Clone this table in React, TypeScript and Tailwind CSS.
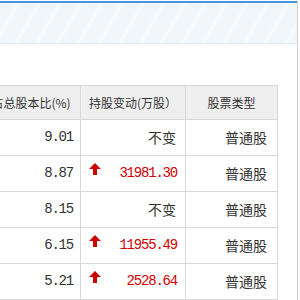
import React from 'react';

type Row = { ratio: string; change: string | null; type: string };

const rows: Row[] = [
  { ratio: '9.01', change: null, type: '普通股' },
  { ratio: '8.87', change: '31981.30', type: '普通股' },
  { ratio: '8.15', change: null, type: '普通股' },
  { ratio: '6.15', change: '11955.49', type: '普通股' },
  { ratio: '5.21', change: '2528.64', type: '普通股' },
];

const cjk = "font-['Noto_Sans_CJK_SC',sans-serif]";
const num = "font-['Liberation_Mono',monospace] text-[14px] tracking-[-1.2px] mr-[-1px]";

const UpArrow: React.FC = () => (
  <svg width="12" height="12" viewBox="0 0 12 12" className="shrink-0 -mt-[10px]">
    <polygon points="6,0 12,6 8,6 8,12 4,12 4,6 0,6" fill="#cc0000" />
  </svg>
);

const App: React.FC = () => {
  return (
    <div className="w-[300px] h-[300px] overflow-hidden bg-white">
      <div className="w-[298px] h-[300px] border-r border-[#cfcfcf]">
        <div className="mt-px h-[43px] border-t-2 border-[#4b93d8] border-b border-b-[#dfe9f1] bg-[repeating-linear-gradient(120deg,#f1f6fb_0px,#f1f6fb_14px,#f6f9fc_14px,#f6f9fc_18px)]" />
        <div className="h-[41px]" />
        <div className="-ml-[19px] w-[297px] border-t border-l border-[#d8d8d8]">
          <div className={`flex h-[34px] bg-[#efefef] border-b border-[#d8d8d8] text-[12px] text-[#333] ${cjk}`}>
            <div className="w-[99px] flex items-center justify-center border-r border-[#d8d8d8]">占总股本比(%)</div>
            <div className="w-[105px] flex items-center justify-center border-r border-[#d8d8d8]">持股变动(万股）</div>
            <div className="w-[92px] flex items-center justify-center border-r border-[#d8d8d8]">股票类型</div>
          </div>
          {rows.map((r, i) => (
            <div key={i} className="flex h-[36px] border-b border-[#d8d8d8] text-[#333]">
              <div className="w-[99px] flex items-center justify-end pr-[8px] border-r border-[#d8d8d8]">
                <span className={num}>{r.ratio}</span>
              </div>
              <div className="w-[105px] flex items-center justify-between pl-[8px] pr-[9px] border-r border-[#d8d8d8]">
                {r.change ? (
                  <>
                    <UpArrow />
                    <span className={`${num} text-[#d40000]`}>{r.change}</span>
                  </>
                ) : (
                  <>
                    <span />
                    <span className={`${cjk} text-[14px]`}>不变</span>
                  </>
                )}
              </div>
              <div className={`w-[92px] flex items-center justify-end pr-[10px] border-r border-[#d8d8d8] text-[14px] ${cjk}`}>
                {r.type}
              </div>
            </div>
          ))}
        </div>
      </div>
    </div>
  );
};

export default App;
